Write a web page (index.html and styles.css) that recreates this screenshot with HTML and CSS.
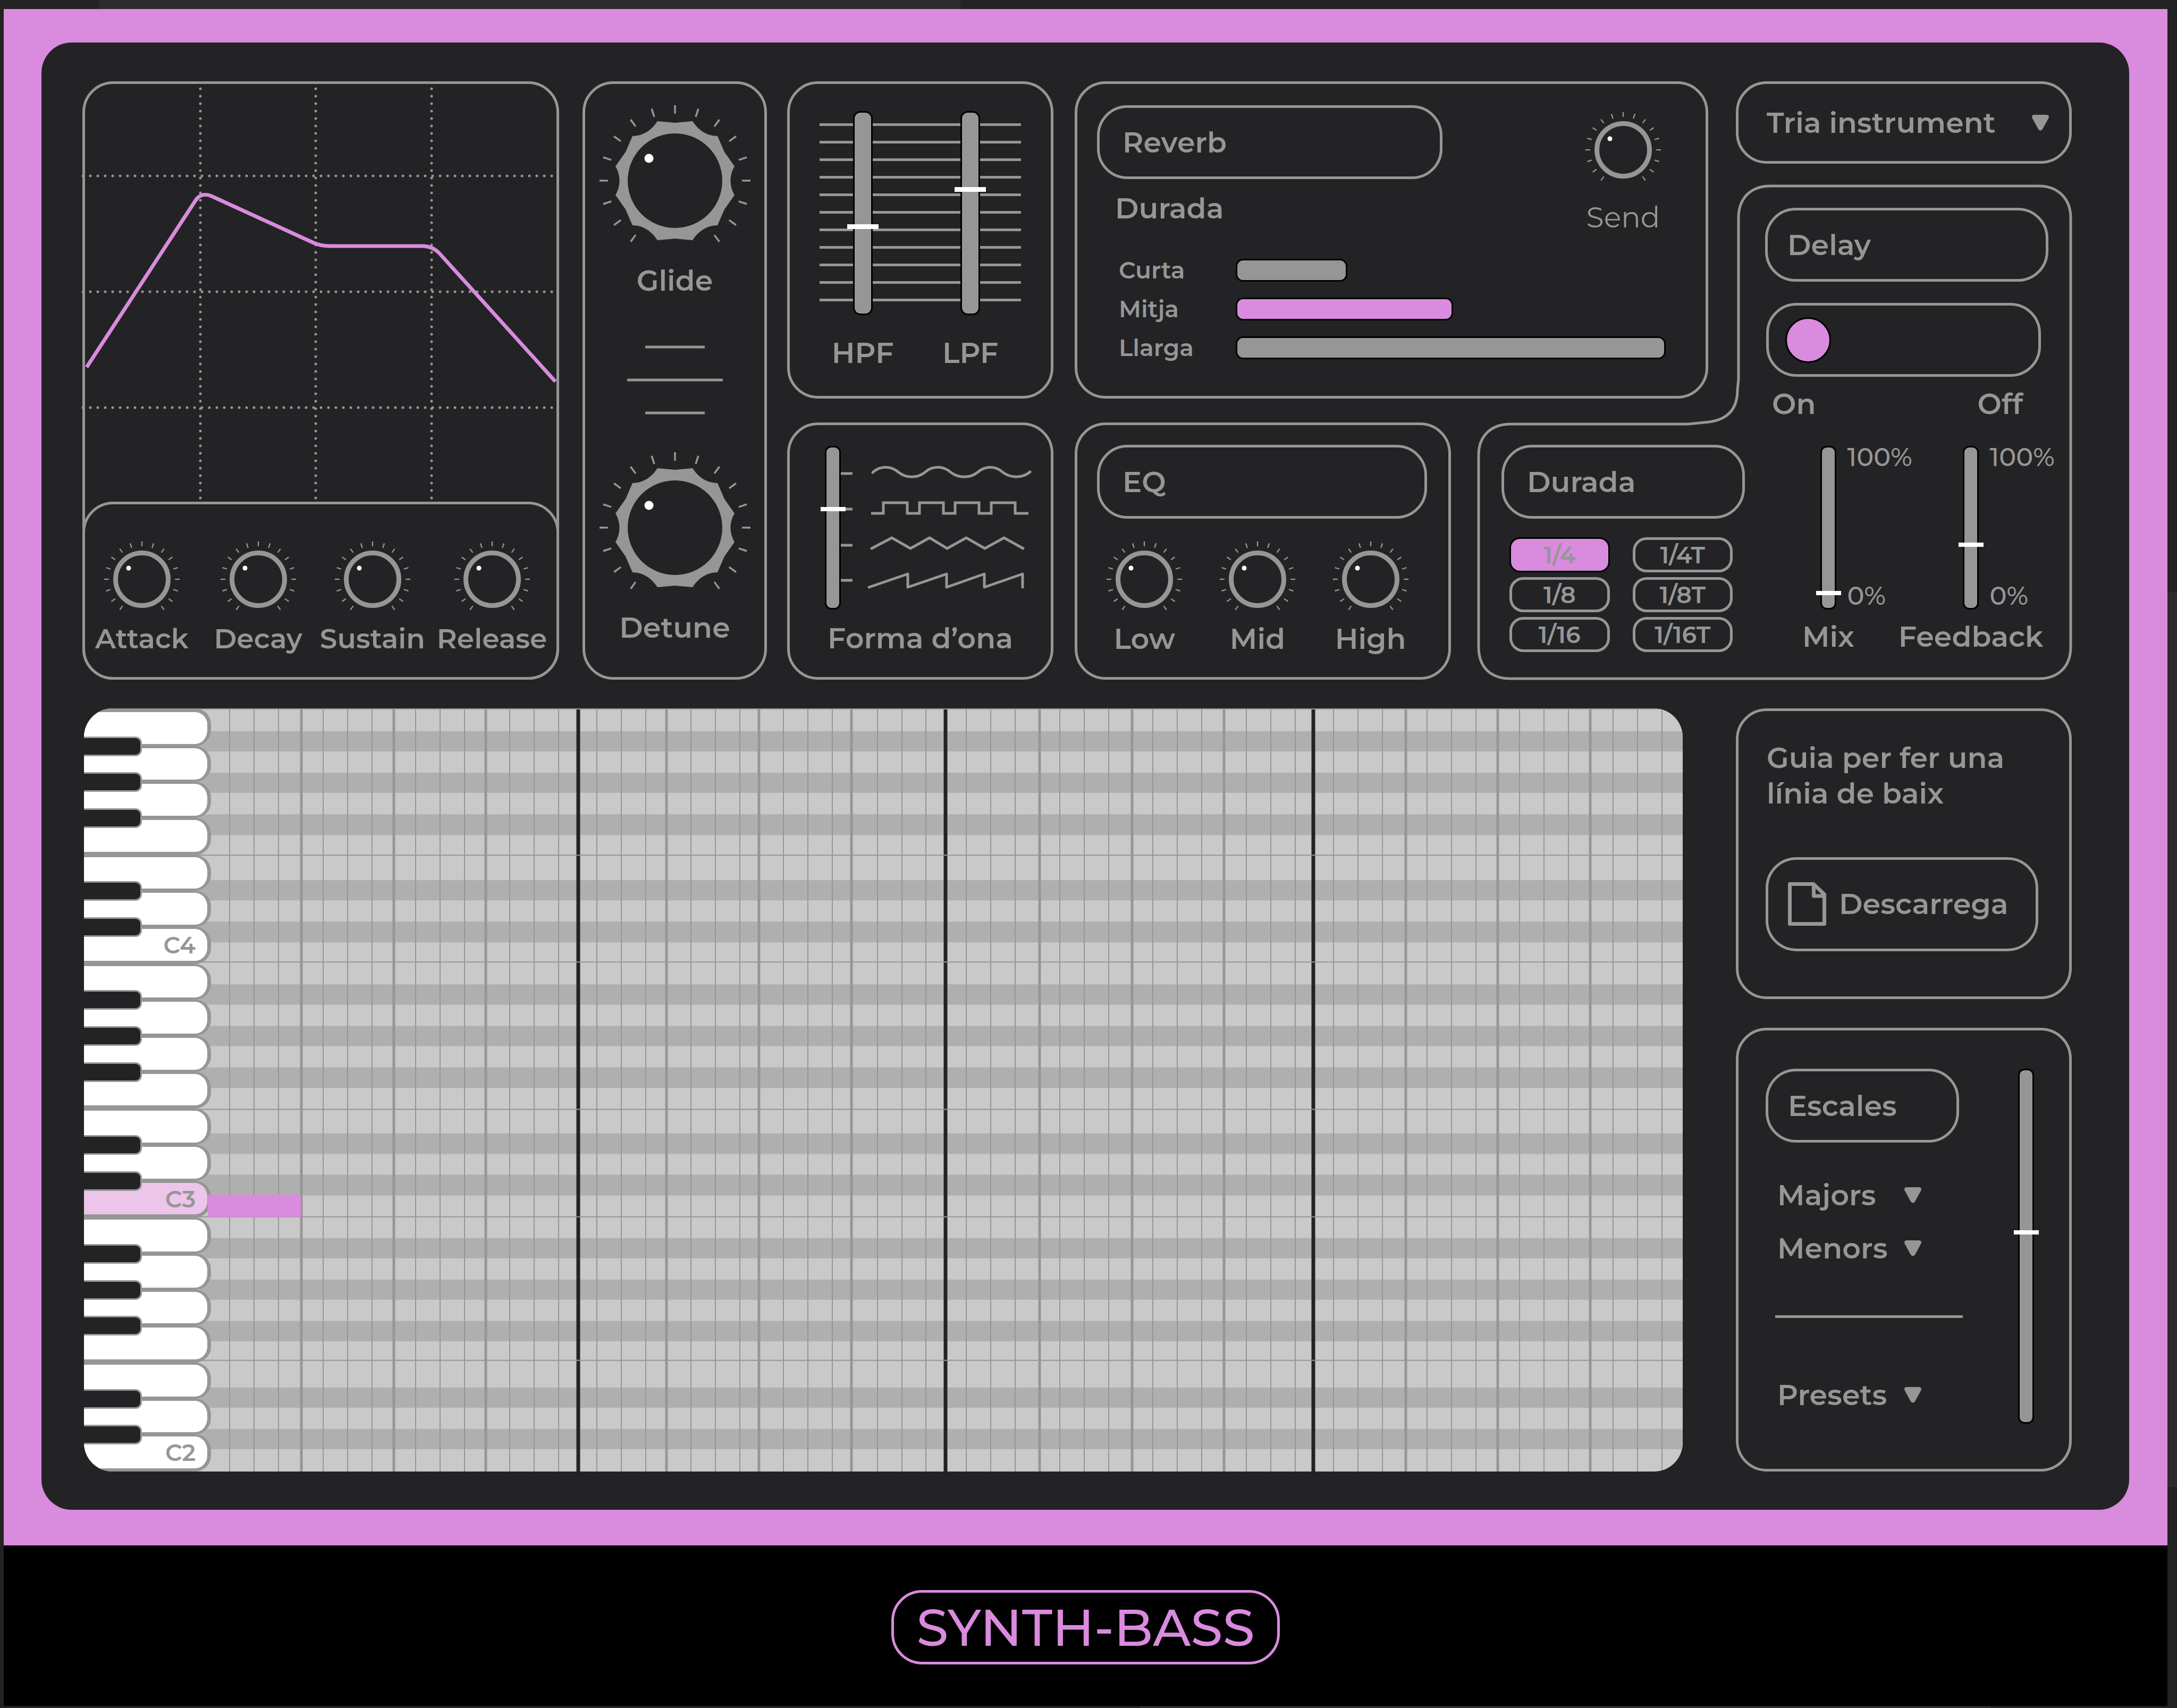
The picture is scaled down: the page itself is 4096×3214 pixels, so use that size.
FILE: index.html
```html
<!DOCTYPE html>
<html lang="ca">
<head>
<meta charset="utf-8">
<meta name="viewport" content="width=device-width, initial-scale=1">
<title>Synth-Bass</title>
<link rel="stylesheet" href="styles.css">
</head>
<body>
<svg class="sprites" aria-hidden="true">
  <symbol id="knob-small" viewBox="-72 -72 144 144">
    <path class="ticks" d="M-38.1 54.5A66.5 66.5 0 1 1 38.1 54.5" pathLength="290" stroke-width="9" stroke-dasharray="2 16"/>
    <circle class="ring" r="49.5" stroke-width="9"/>
    <circle class="dot" cx="-25" cy="-21" r="4.5"/>
  </symbol>
  <symbol id="knob-large" viewBox="-142 -142 284 284">
    <path class="ticks" d="M-77.3 109.4A134 134 0 1 1 77.3 109.4" pathLength="289.5" stroke-width="16" stroke-dasharray="1.5 16.5"/>
    <path class="gear" fill-rule="evenodd" d="M-33 -112L0 -109L33 -112C44 -95 60 -84 80 -84L93 -54L112 -27C102 -10 102 10 112 27L93 54L80 84C60 84 44 95 33 112L0 109L-33 112C-44 95 -60 84 -80 84L-93 54L-112 27C-102 10 -102 -10 -112 -27L-93 -54L-80 -84C-60 -84 -44 -95 -33 -112ZM-89 0A89 89 0 1 0 89 0A89 89 0 1 0 -89 0Z"/>
    <circle class="dot" cx="-49" cy="-42" r="8.5"/>
  </symbol>
  <symbol id="arrow" viewBox="0 0 32 30">
    <path class="gear" d="M4 0H28Q34 1 31 7L20 27Q16 32 12 27L1 7Q-2 1 4 0Z"/>
  </symbol>
</svg>

<div class="frame">
  <main class="deck">

    <section class="panel adsr" aria-label="Envolupant">
      <svg class="adsr-plot" viewBox="1 1 887 786" role="img" aria-label="Corba ADSR">
        <path class="dotted" d="M218 10V787M435 10V787M653 10V787M-3 174H880M-3 392H880M-3 610H880"/>
        <path class="curve" d="M4 534L209 220C217 208 229 207 241 213L429 299Q444 306 461 306H638Q656 307 668 320L886 561"/>
      </svg>
      <div class="adsr-knobs">
        <label class="knob"><svg class="knob-face"><use href="#knob-small"/></svg><input class="knob-input" type="range" value="30"><span>Attack</span></label>
        <label class="knob"><svg class="knob-face"><use href="#knob-small"/></svg><input class="knob-input" type="range" value="30"><span>Decay</span></label>
        <label class="knob"><svg class="knob-face"><use href="#knob-small"/></svg><input class="knob-input" type="range" value="30"><span>Sustain</span></label>
        <label class="knob"><svg class="knob-face"><use href="#knob-small"/></svg><input class="knob-input" type="range" value="30"><span>Release</span></label>
      </div>
    </section>

    <section class="panel glide" aria-label="Glide i detune">
      <label class="knob knob-big"><svg class="knob-face"><use href="#knob-large"/></svg><input class="knob-input" type="range" value="30"><span>Glide</span></label>
      <svg class="glide-lines" viewBox="0 0 180 128" aria-hidden="true"><path d="M34 2H146M0 64H180M34 126H146"/></svg>
      <label class="knob knob-big"><svg class="knob-face"><use href="#knob-large"/></svg><input class="knob-input" type="range" value="30"><span>Detune</span></label>
    </section>

    <section class="panel filter" aria-label="Filtres">
      <label class="filter-fader"><input class="fader fader-wide" type="range" value="43"><span>HPF</span></label>
      <label class="filter-fader"><input class="fader fader-wide" type="range" value="62"><span>LPF</span></label>
    </section>

    <section class="panel wave">
      <div class="wave-row">
        <input id="wave" class="fader" type="range" value="62">
        <svg class="wave-shapes" viewBox="0 0 360 308" aria-hidden="true">
          <path d="M0 52H22M0 119H22M0 187H22M0 253H22"/>
          <path class="soft" d="M60 50C74 37 94 37 109 50C123 61 144 61 158 50C172 37 193 37 207 50C222 61 243 61 257 50C272 37 291 37 305 50C320 61 342 61 356 49"/>
          <path d="M57 127H80V107H125V127H148V107H193V127H215V107H260V127H283V107H328V127H353"/>
          <path class="soft" d="M58 193L96 173L131 193L167 173L200 193L236 173L271 193L307 173L343 193"/>
          <path class="soft" d="M53 266L126 241V266L199 241V266L270 241V266L342 241V266"/>
        </svg>
      </div>
      <label for="wave">Forma d’ona</label>
    </section>

    <section class="panel reverb">
      <div class="reverb-head">
        <div class="reverb-titles">
          <h2 class="title">Reverb</h2>
          <h3 class="subtitle" id="rev-dur">Durada</h3>
        </div>
        <label class="knob knob-send"><svg class="knob-face"><use href="#knob-small"/></svg><input class="knob-input" type="range" value="30"><span>Send</span></label>
      </div>
      <div class="lengths" role="radiogroup" aria-labelledby="rev-dur">
        <label for="curta">Curta</label><input id="curta" class="bar" type="radio" name="len" style="width:26%">
        <label for="mitja">Mitja</label><input id="mitja" class="bar" type="radio" name="len" style="width:50.5%" checked>
        <label for="llarga">Llarga</label><input id="llarga" class="bar" type="radio" name="len" style="width:100%">
      </div>
    </section>

    <section class="panel eq">
      <h2 class="title">EQ</h2>
      <div class="eq-knobs">
        <label class="knob"><svg class="knob-face"><use href="#knob-small"/></svg><input class="knob-input" type="range" value="30"><span>Low</span></label>
        <label class="knob"><svg class="knob-face"><use href="#knob-small"/></svg><input class="knob-input" type="range" value="30"><span>Mid</span></label>
        <label class="knob"><svg class="knob-face"><use href="#knob-small"/></svg><input class="knob-input" type="range" value="30"><span>High</span></label>
      </div>
    </section>

    <div class="panel instrument">
      <select class="select" aria-label="Instrument"><option>Tria instrument</option></select>
      <svg class="arrow"><use href="#arrow"/></svg>
    </div>

    <section class="delay">
      <svg class="delay-outline" viewBox="0 0 1118 931" preserveAspectRatio="none" aria-hidden="true">
        <path d="M551 2H1056C1092 2 1116 26 1116 62V869C1116 907 1092 929 1056 929H62C24 929 2 907 2 869V508C2 472 26 450 62 450H396L436 446C472 441 489 420 489 386L491 366V62C491 26 513 2 551 2Z"/>
      </svg>
      <div class="delay-time">
        <h2 class="title">Durada</h2>
        <div class="chips">
          <button class="chip chip-on" type="button">1/4</button><button class="chip" type="button">1/4T</button>
          <button class="chip" type="button">1/8</button><button class="chip" type="button">1/8T</button>
          <button class="chip" type="button">1/16</button><button class="chip" type="button">1/16T</button>
        </div>
      </div>
      <div class="delay-main">
        <h2 class="title title-side">Delay</h2>
        <input class="switch" type="checkbox" role="switch" aria-label="Delay" checked>
        <div class="switch-labels"><span>On</span><span>Off</span></div>
        <div class="delay-faders">
          <div class="scaled">
            <input id="mix" class="fader" type="range" value="8">
            <div class="scale"><span>100%</span><span>0%</span></div>
            <label for="mix">Mix</label>
          </div>
          <div class="scaled">
            <input id="feedback" class="fader" type="range" value="39">
            <div class="scale"><span>100%</span><span>0%</span></div>
            <label for="feedback">Feedback</label>
          </div>
        </div>
      </div>
    </section>

    <section class="roll" aria-label="Piano roll">
      <svg class="roll-grid" viewBox="0 0 3008 1435" preserveAspectRatio="none" aria-hidden="true">
        <path class="row-dark" d="M0 43H3008V81H0ZM0 121H3008V159H0ZM0 199H3008V238H0ZM0 323H3008V361H0ZM0 401H3008V440H0ZM0 519H3008V557H0ZM0 597H3008V635H0ZM0 675H3008V714H0ZM0 799H3008V838H0ZM0 877H3008V916H0ZM0 996H3008V1034H0ZM0 1074H3008V1112H0ZM0 1152H3008V1190H0ZM0 1277H3008V1315H0ZM0 1355H3008V1393H0Z"/>
        <path class="bar-line" d="M930 0V1435M1621 0V1435M2313 0V1435"/>
        <path class="thin-line" d="M0 1H3008M0 276H3008M0 477H3008M0 754H3008M0 956H3008M0 1226H3008"/>
        <path class="thin-line" d="M274 0V1435M320 0V1435M366 0V1435M450 0V1435M496 0V1435M542 0V1435M624 0V1435M670 0V1435M716 0V1435M801 0V1435M847 0V1435M893 0V1435M965 0V1435M1011 0V1435M1057 0V1435M1142 0V1435M1188 0V1435M1234 0V1435M1316 0V1435M1362 0V1435M1408 0V1435M1493 0V1435M1539 0V1435M1584 0V1435M1660 0V1435M1706 0V1435M1752 0V1435M1836 0V1435M1882 0V1435M1928 0V1435M2011 0V1435M2057 0V1435M2103 0V1435M2187 0V1435M2233 0V1435M2279 0V1435M2351 0V1435M2397 0V1435M2443 0V1435M2527 0V1435M2573 0V1435M2619 0V1435M2701 0V1435M2747 0V1435M2793 0V1435M2877 0V1435M2923 0V1435M2969 0V1435"/>
        <path class="beat-line" d="M409 0V1435M583 0V1435M756 0V1435M1096 0V1435M1270 0V1435M1444 0V1435M1798 0V1435M1972 0V1435M2145 0V1435M2487 0V1435M2660 0V1435M2834 0V1435"/>
      </svg>
      <div class="keys">
        <div class="key"><i class="sharp"></i></div>
        <div class="key"><i class="sharp"></i></div>
        <div class="key"><i class="sharp"></i></div>
        <div class="key key-end"></div>
        <div class="key"><i class="sharp"></i></div>
        <div class="key"><i class="sharp"></i></div>
        <div class="key key-end">C4</div>
        <div class="key"><i class="sharp"></i></div>
        <div class="key"><i class="sharp"></i></div>
        <div class="key"><i class="sharp"></i></div>
        <div class="key key-end"></div>
        <div class="key"><i class="sharp"></i></div>
        <div class="key"><i class="sharp"></i></div>
        <div class="key key-end key-on">C3</div>
        <div class="key"><i class="sharp"></i></div>
        <div class="key"><i class="sharp"></i></div>
        <div class="key"><i class="sharp"></i></div>
        <div class="key key-end"></div>
        <div class="key"><i class="sharp"></i></div>
        <div class="key"><i class="sharp"></i></div>
        <div class="key key-end">C2</div>
      </div>
      <div class="note" style="left:7.75%;top:63.75%;width:5.8%;height:2.9%"></div>
    </section>

    <section class="panel guide">
      <p>Guia per fer una línia de baix</p>
      <button class="download" type="button">
        <svg class="doc" viewBox="0 0 72 82" aria-hidden="true"><path d="M3.500 3.500H48L68.500 23V78.500H3.500ZM48.500 4V26H68"/></svg>
        Descarrega
      </button>
    </section>

    <section class="panel scales">
      <div class="scales-list">
        <h2 class="title title-side">Escales</h2>
        <div class="drop"><select class="select" aria-label="Majors"><option>Majors</option></select><svg class="arrow"><use href="#arrow"/></svg></div>
        <div class="drop"><select class="select" aria-label="Menors"><option>Menors</option></select><svg class="arrow"><use href="#arrow"/></svg></div>
        <hr class="rule">
        <div class="drop"><select class="select" aria-label="Presets"><option>Presets</option></select><svg class="arrow"><use href="#arrow"/></svg></div>
      </div>
      <input class="fader fader-tall" type="range" value="54" aria-label="Desplaçament">
    </section>
  </main>
</div>

<footer class="footer"><h1 class="logo">SYNTH-BASS</h1></footer>
</body>
</html>
```
FILE: styles.css
```css
:root {
  --pink: #d98bdd;
  --dark: #232325;
  --line: #969696;
  --stroke: 5px;
  --text-small: 44px;
}

* { box-sizing: border-box; }

body {
  margin: 0;
  min-height: 100vh;
  padding: 17px 18px 4px 7px;
  display: flex;
  flex-direction: column;
  color: var(--line);
  font: 600 54px/64px Montserrat, "DejaVu Sans", sans-serif;
  background:
    linear-gradient(#2c2c2c, #2c2c2c) 187px 0 / 1620px 17px no-repeat,
    linear-gradient(#2c2c2c, #2c2c2c) 100% 1114px / 18px 1684px no-repeat,
    linear-gradient(#2c2c2c, #2c2c2c) 2145px 100% / 1600px 4px no-repeat,
    #232323;
}

h1, h2, h3, p { margin: 0; font: inherit; }

input, select, button {
  margin: 0;
  font: inherit;
  color: inherit;
}

svg { display: block; fill: none; stroke: var(--line); stroke-width: 5; overflow: visible; }

.sprites { position: absolute; width: 0; height: 0; }
.ticks { stroke: var(--line); }
.ring { stroke: var(--line); }
.dot { fill: #fff; stroke: none; }
.gear { fill: var(--line); stroke: none; }

.frame { padding: 63px 72px 67px 71px; background: var(--pink); }

.deck {
  padding: 73px 108px 72px 77px;
  border-radius: 57px;
  background: var(--dark);
  display: grid;
  grid-template-columns: 897fr 44px 347fr 38px 501fr 40px 708fr 50px 434fr 52px 632fr;
  grid-template-rows: 155px 40px 402px 45px 484px 54px 547px 54px 835px;
}

.panel { border: var(--stroke) solid var(--line); border-radius: 58px; min-width: 0; }

/* Shared controls */
.title {
  height: 139px;
  padding-left: 43px;
  border: var(--stroke) solid var(--line);
  border-radius: 57px;
  display: flex;
  align-items: center;
}
.title-side { padding-left: 37px; }

.knob { display: grid; justify-items: center; row-gap: 8px; }
.knob-face { grid-area: 1 / 1; width: 144px; height: 144px; }
.knob-input { grid-area: 1 / 1; width: 144px; height: 144px; opacity: 0; }
.knob-big { row-gap: 14px; }
.knob-big .knob-face, .knob-big .knob-input { width: 284px; height: 284px; }
.knob-send { row-gap: 23px; font-weight: 400; }

.fader {
  appearance: none;
  writing-mode: vertical-lr;
  direction: rtl;
  width: 47px;
  height: 308px;
  background: none;
  position: relative;
  z-index: 1;
}
.fader::-webkit-slider-runnable-track {
  width: 30px;
  height: 100%;
  border: 3px solid #000;
  border-radius: 12px;
  background: var(--line);
}
.fader::-webkit-slider-thumb {
  appearance: none;
  width: 47px;
  height: 8px;
  margin-left: -11px;
  background: #fff;
}
.fader-wide { width: 59px; height: 384px; }
.fader-wide::-webkit-slider-runnable-track { width: 37px; border-radius: 14px; }
.fader-wide::-webkit-slider-thumb { width: 59px; height: 9px; margin-left: -14px; }
.fader-tall { height: 668px; }

.select {
  appearance: none;
  grid-area: 1 / 1;
  width: 100%;
  padding: 0;
  border: 0;
  background: none;
}
.arrow { grid-area: 1 / 1; justify-self: end; width: 32px; height: 30px; pointer-events: none; }

/* Envelope */
.adsr { grid-area: 1 / 1 / 6 / 2; display: flex; flex-direction: column; }
.adsr-plot { width: 100%; }
.dotted { stroke-width: 5; stroke-linecap: round; stroke-dasharray: 0 14; }
.curve { stroke: var(--pink); stroke-width: 7; }
.adsr-knobs {
  flex: 1;
  margin: 0 -5px -5px;
  padding-top: 69px;
  border: var(--stroke) solid var(--line);
  border-radius: 58px;
  display: grid;
  grid-template-columns: 214fr 224fr 207fr 243fr;
  align-items: start;
  font-size: 52px;
}

/* Glide and detune */
.glide {
  grid-area: 1 / 3 / 6 / 4;
  padding-top: 40px;
  display: flex;
  flex-direction: column;
  align-items: center;
}
.glide-lines { width: 180px; height: 128px; margin: 91px 0 72px; }

/* Filters */
.filter {
  grid-area: 1 / 5 / 4 / 6;
  padding: 51px 50px 0 36px;
  display: grid;
  grid-template-columns: 1fr 1fr;
  align-items: start;
  background: repeating-linear-gradient(var(--line) 0 5px, transparent 5px 33px) 56px 74px / calc(100% - 112px) 335px no-repeat;
}
.filter-fader { display: grid; justify-items: center; row-gap: 39px; }

/* Waveform */
.wave { grid-area: 5 / 5 / 6 / 6; padding-top: 39px; display: flex; flex-direction: column; gap: 22px; align-items: center; }
.wave-row { display: flex; align-self: flex-start; padding-left: 57px; }
.wave-shapes { width: 360px; height: 308px; margin-left: -8px; }
.soft { stroke-linecap: round; stroke-linejoin: round; }

/* Reverb */
.reverb { grid-area: 1 / 7 / 4 / 10; padding: 40px 75px 0 37px; }
.reverb-head { display: flex; justify-content: space-between; align-items: flex-start; }
.reverb-titles { flex: 0 1 650px; }
.subtitle { margin-top: 23px; padding-left: 34px; }
.knob-send { margin: 12px 8px 0 0; }
.lengths {
  margin-top: 40px;
  padding-left: 41px;
  display: grid;
  grid-template-columns: 220px 1fr;
  row-gap: 19px;
  align-items: center;
  font-size: var(--text-small);
  line-height: 54px;
}
.bar {
  appearance: none;
  height: 43px;
  border: 3px solid #000;
  border-radius: 14px;
  background: var(--line);
}
.bar:checked { background: var(--pink); }

/* EQ */
.eq { grid-area: 5 / 7 / 6 / 8; padding: 37px 40px 0 37px; }
.eq-knobs { margin: 42px 0 0 -17px; display: grid; grid-template-columns: repeat(3, 1fr); }

/* Instrument */
.instrument { grid-area: 1 / 11 / 2 / 12; padding: 0 38px 0 53px; display: grid; align-items: center; }

/* Delay: an L-shaped panel that wraps round the reverb's corner */
.delay {
  grid-area: 3 / 9 / 6 / 12;
  position: relative;
  display: grid;
  grid-template-columns: 520fr 598fr;
}
.delay-outline { position: absolute; inset: 0; width: 100%; height: 100%; }
.delay-time { padding: 489px 17px 0 45px; }
.chips {
  margin: 35px 23px 0 15px;
  display: grid;
  grid-template-columns: 1fr 1fr;
  grid-auto-rows: 66px;
  gap: 9px 43px;
}
.chip {
  padding: 0;
  border: var(--stroke) solid var(--line);
  border-radius: 26px;
  background: none;
  font-size: var(--text-small);
  line-height: 48px;
}
.chip-on { border: 3px solid #000; border-radius: 20px; background: var(--pink); }
.delay-main { padding: 43px 44px 0 21px; }
.switch {
  appearance: none;
  width: 517px;
  height: 139px;
  margin: 40px 0 0 2px;
  padding: 0 31px;
  border: var(--stroke) solid var(--line);
  border-radius: 57px;
  display: flex;
  align-items: center;
  justify-content: flex-end;
}
.switch:checked { justify-content: flex-start; }
.switch::before {
  content: "";
  width: 80px;
  height: 80px;
  border: 3px solid #000;
  border-radius: 50%;
  background: var(--pink);
}
.switch-labels { margin-top: 19px; padding: 0 48px 0 13px; display: flex; justify-content: space-between; }
.delay-faders { margin: 47px 12px 0 -15px; display: grid; grid-template-columns: 1fr 1fr; }
.scaled {
  display: grid;
  grid-template-columns: minmax(0, 1fr) 47px minmax(0, 1fr);
  gap: 19px 0;
  justify-items: center;
}
.scaled .fader { grid-column: 2; }
.scaled label { grid-column: 1 / 4; }
.scale {
  justify-self: start;
  padding: 0 0 5px 12px;
  display: flex;
  flex-direction: column;
  justify-content: space-between;
  font-size: 48px;
  font-weight: 500;
  line-height: 42px;
}

/* Piano roll */
.roll {
  grid-area: 7 / 1 / 10 / 10;
  margin: 0 48px 0 3px;
  border-radius: 54px;
  overflow: hidden;
  position: relative;
  display: grid;
  background: #c9c9c9;
}
.roll-grid { grid-area: 1 / 1; width: 100%; height: 100%; min-height: 0; overflow: hidden; }
.row-dark { fill: #afafaf; stroke: none; }
.thin-line { stroke-width: 2; }
.beat-line { stroke-width: 5; }
.bar-line { stroke: var(--dark); stroke-width: 7; }
.keys { grid-area: 1 / 1; width: 239px; position: relative; display: flex; flex-direction: column; }
.key {
  flex: 1;
  position: relative;
  padding-right: 22px;
  border: solid var(--line);
  border-width: 4px 7px 4px 0;
  border-radius: 0 30px 30px 0;
  background: #fff;
  display: flex;
  align-items: center;
  justify-content: flex-end;
  font-size: var(--text-small);
  line-height: 48px;
}
.key:first-child { border-top-width: 7px; }
.key-end { border-bottom-width: 6px; }
.key-on { background: #edc5ea; }
.sharp {
  position: absolute;
  z-index: 1;
  left: 0;
  bottom: -23px;
  width: 109px;
  height: 37px;
  border: solid var(--line);
  border-width: 3px 3px 3px 0;
  border-radius: 0 12px 12px 0;
  background: var(--dark);
}
.note { position: absolute; z-index: 2; background: var(--pink); }

/* Guide */
.guide { grid-area: 7 / 11 / 8 / 12; padding: 55px 58px 0 51px; }
.guide p { padding: 0 50px 0 2px; line-height: 67px; }
.download {
  width: 100%;
  height: 177px;
  margin-top: 86px;
  padding: 0 0 2px 37px;
  border: var(--stroke) solid var(--line);
  border-radius: 58px;
  background: none;
  display: flex;
  align-items: center;
  gap: 24px;
}
.doc { width: 72px; height: 82px; stroke-width: 7; stroke-linejoin: round; }

/* Scales */
.scales { grid-area: 9 / 11 / 10 / 12; padding: 72px 58px 0 51px; display: flex; justify-content: space-between; align-items: flex-start; }
.scales-list { width: 372px; }
.scales .title { width: 364px; margin-bottom: 67px; }
.drop { width: 271px; margin: 0 0 36px 22px; display: grid; align-items: center; }
.rule { width: 353px; margin: 94px 0 113px 18px; border: 0; border-top: var(--stroke) solid var(--line); }

/* Footer */
.footer { flex: 1; padding: 84px 0 78px; background: #000; display: flex; justify-content: center; align-items: flex-start; }
.logo {
  width: 731px;
  height: 140px;
  border: var(--stroke) solid var(--pink);
  border-radius: 58px;
  color: var(--pink);
  display: flex;
  align-items: center;
  justify-content: center;
  font-size: 97px;
  font-weight: 500;
}
```
